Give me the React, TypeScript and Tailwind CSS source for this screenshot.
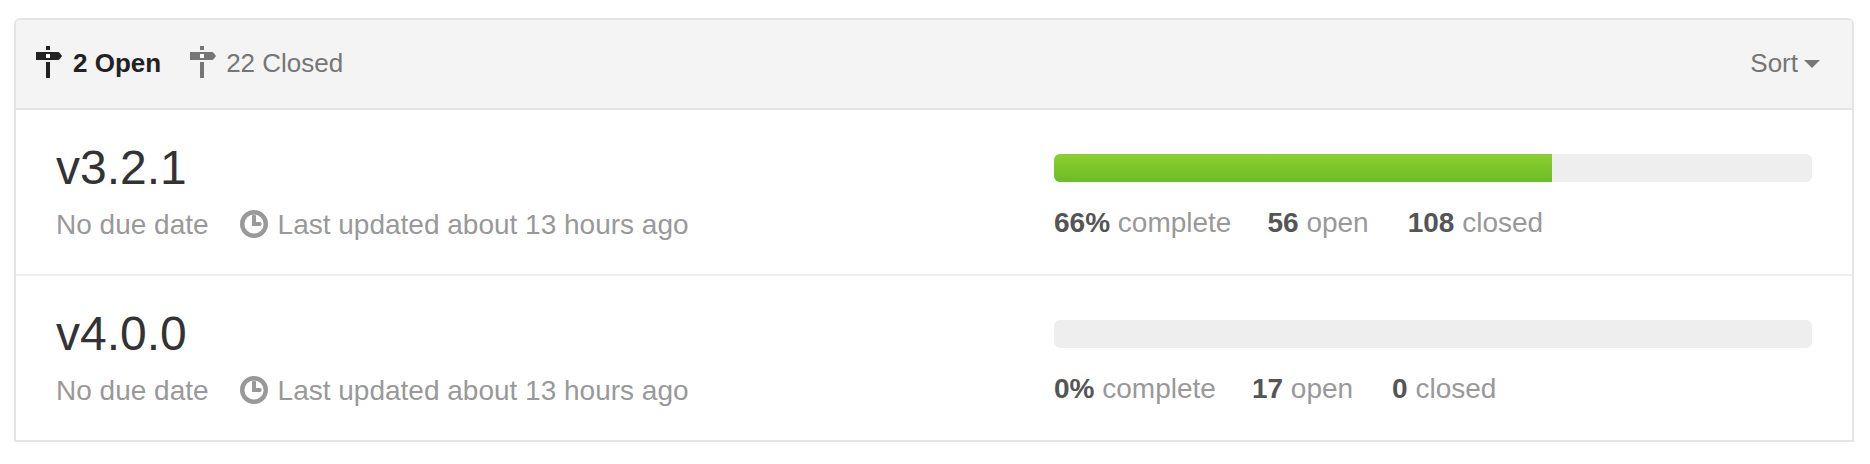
const milestones = [
  { title: 'v3.2.1', percent: 66, fill: 65.7, open: 56, closed: 108 },
  { title: 'v4.0.0', percent: 0, fill: 0, open: 17, closed: 0 },
];

function MilestoneIcon() {
  return (
    <svg viewBox="0 0 26 32" className="h-8 w-[26px] shrink-0" fill="currentColor" aria-hidden="true">
      <path d="M10 0h4v4h-4z M0 6h22q1 0 1.6.7L26 10l-2.4 3.3q-.6.7-1.6.7H0z M10 16h4v16h-4z" />
      <path d="M10 8h4v4h-4z" fill="#fff" />
    </svg>
  );
}

function ClockIcon() {
  return (
    <svg viewBox="0 0 28 28" className="size-7 shrink-0" aria-hidden="true">
      <circle cx="14" cy="14" r="11.8" fill="none" stroke="currentColor" strokeWidth="4.4" />
      <path d="M12 6q0-1.5 2-1.5t2 1.5v6h4q1.6 0 1.6 2t-1.6 2h-8z" fill="currentColor" />
    </svg>
  );
}

function Stat({ value, label }: { value: string; label: string }) {
  return (
    <span>
      <strong className="font-bold text-[#555]">{value}</strong> {label}
    </span>
  );
}

export default function App() {
  return (
    <div className="h-[464px] bg-white px-4 pt-[18px] pl-[14px] font-['Liberation_Sans',Arial,sans-serif]">
      <div className="h-[424px] w-[1840px] rounded-t-md border-2 border-[#e5e5e5]">
        <div className="flex h-[90px] items-start rounded-t-sm border-b-2 border-[#e5e5e5] bg-[#f4f4f4] pt-[26px] pr-8 pl-5 text-[26px] leading-8 text-[#767676]">
          <div className="flex gap-[11px] font-bold text-[#222]">
            <MilestoneIcon />
            <span className="mt-px">2 Open</span>
          </div>
          <div className="ml-[29px] flex gap-[10px]">
            <MilestoneIcon />
            <span className="mt-px">22 Closed</span>
          </div>
          <div className="mt-px ml-auto flex items-center gap-1.5">
            <span>Sort</span>
            <svg viewBox="0 0 16 8" className="mt-0.5 h-2 w-4" fill="currentColor" aria-hidden="true">
              <path d="M0 0h16L8 8z" />
            </svg>
          </div>
        </div>
        {milestones.map((m) => (
          <div key={m.title} className="flex h-[166px] justify-between border-b-2 border-[#eee] pr-10 pl-10 text-[28px] leading-8 text-[#999] last:h-[164px] last:border-b-0">
            <div className="pt-[30px]">
              <h2 className="text-[48px] leading-[56px] font-normal text-[#333]">{m.title}</h2>
              <div className="mt-[13px] flex gap-[31px]">
                <span>No due date</span>
                <div className="flex gap-[10px]">
                  <span className="pt-px">
                    <ClockIcon />
                  </span>
                  <span>Last updated about 13 hours ago</span>
                </div>
              </div>
            </div>
            <div className="w-[758px] pt-11">
              <div className="h-7 overflow-hidden rounded-[6px] bg-[#eee]">
                <div className="h-full bg-linear-to-b from-[#8cd02f] to-[#6cbc26]" style={{ width: `${m.fill}%` }} />
              </div>
              <div className="mt-[25px] flex">
                <Stat value={`${m.percent}%`} label="complete" />
                <span className="w-9" />
                <Stat value={`${m.open}`} label="open" />
                <span className="w-[39px]" />
                <Stat value={`${m.closed}`} label="closed" />
              </div>
            </div>
          </div>
        ))}
      </div>
    </div>
  );
}
